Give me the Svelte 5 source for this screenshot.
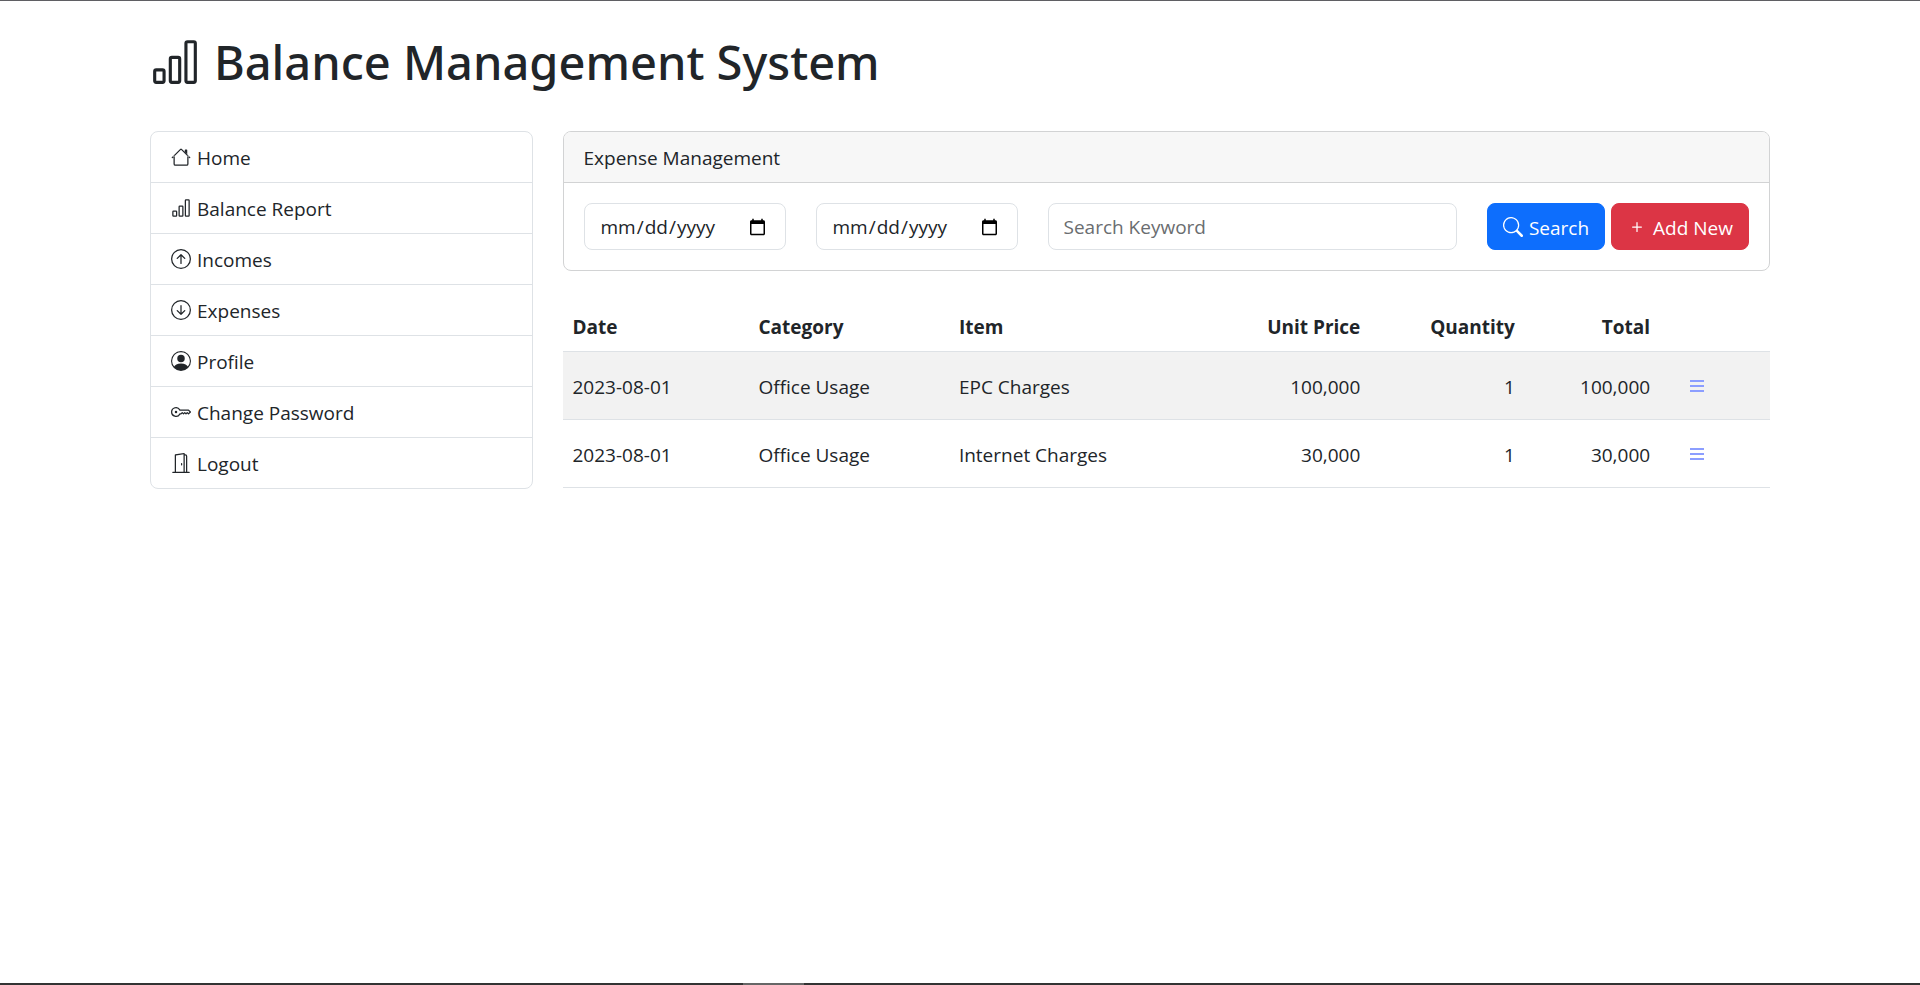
<script>
  const icons = {
    house: 'M2 13.5V7h1v6.5a.5.5 0 0 0 .5.5h9a.5.5 0 0 0 .5-.5V7h1v6.5a1.5 1.5 0 0 1-1.5 1.5h-9A1.5 1.5 0 0 1 2 13.5zm11-11V6l-2-2V2.5a.5.5 0 0 1 .5-.5h1a.5.5 0 0 1 .5.5zM7.293 1.5a1 1 0 0 1 1.414 0l6.647 6.646a.5.5 0 0 1-.708.708L8 2.207 1.354 8.854a.5.5 0 1 1-.708-.708L7.293 1.5z',
    chart: 'M4 11H2v3h2v-3zm5-4H7v7h2V7zm5-5v12h-2V2h2zm-2-1a1 1 0 0 0-1 1v12a1 1 0 0 0 1 1h2a1 1 0 0 0 1-1V2a1 1 0 0 0-1-1h-2zM6 7a1 1 0 0 1 1-1h2a1 1 0 0 1 1 1v7a1 1 0 0 1-1 1H7a1 1 0 0 1-1-1V7zm-5 4a1 1 0 0 1 1-1h2a1 1 0 0 1 1 1v3a1 1 0 0 1-1 1H2a1 1 0 0 1-1-1v-3z',
    up: 'M1 8a7 7 0 1 0 14 0A7 7 0 0 0 1 8zm15 0A8 8 0 1 1 0 8a8 8 0 0 1 16 0zm-7.5 3.5a.5.5 0 0 1-1 0V5.707L5.354 7.854a.5.5 0 1 1-.708-.708l3-3a.5.5 0 0 1 .708 0l3 3a.5.5 0 0 1-.708.708L8.5 5.707V11.5z',
    down: 'M1 8a7 7 0 1 0 14 0A7 7 0 0 0 1 8zm15 0A8 8 0 1 1 0 8a8 8 0 0 1 16 0zM8.5 4.5a.5.5 0 0 0-1 0v5.793L5.354 8.146a.5.5 0 1 0-.708.708l3 3a.5.5 0 0 0 .708 0l3-3a.5.5 0 0 0-.708-.708L8.5 10.293V4.5z',
    person: 'M11 6a3 3 0 1 1-6 0 3 3 0 0 1 6 0zM0 8a8 8 0 1 1 16 0A8 8 0 0 1 0 8zm8-7a7 7 0 0 0-5.468 11.37C3.242 11.226 4.805 10 8 10s4.757 1.225 5.468 2.37A7 7 0 0 0 8 1z',
    key: 'M0 8a4 4 0 0 1 7.465-2H14a.5.5 0 0 1 .354.146l1.5 1.5a.5.5 0 0 1 0 .708l-1.5 1.5a.5.5 0 0 1-.708 0L13 9.207l-.646.647a.5.5 0 0 1-.708 0L11 9.207l-.646.647a.5.5 0 0 1-.708 0L9 9.207l-.646.647A.5.5 0 0 1 8 10h-.535A4 4 0 0 1 0 8zm4-3a3 3 0 1 0 2.712 4.285A.5.5 0 0 1 7.163 9h.63l.853-.854a.5.5 0 0 1 .708 0l.646.647.646-.647a.5.5 0 0 1 .708 0l.646.647.646-.647a.5.5 0 0 1 .708 0l.646.647.793-.793-1-1h-6.63a.5.5 0 0 1-.451-.285A3 3 0 0 0 4 5zM5 8a1 1 0 1 1-2 0 1 1 0 0 1 2 0z',
    door: 'M8.5 10c-.276 0-.5-.448-.5-1s.224-1 .5-1 .5.448.5 1-.224 1-.5 1zM10.828.122A.5.5 0 0 1 11 .5V1h.5A1.5 1.5 0 0 1 13 2.5V15h1.5a.5.5 0 0 1 0 1h-13a.5.5 0 0 1 0-1H3V1.5a.5.5 0 0 1 .43-.495l7-1a.5.5 0 0 1 .398.117zM11.5 2H11v13h1V2.5a.5.5 0 0 0-.5-.5zM4 1.934V15h6V1.077l-6 .857z',
    search: 'M11.742 10.344a6.5 6.5 0 1 0-1.397 1.398h-.001c.03.04.062.078.098.115l3.85 3.85a1 1 0 0 0 1.415-1.414l-3.85-3.85a1.007 1.007 0 0 0-.115-.1zM12 6.5a5.5 5.5 0 1 1-11 0 5.5 5.5 0 0 1 11 0z',
    plus: 'M8 4a.5.5 0 0 1 .5.5v3h3a.5.5 0 0 1 0 1h-3v3a.5.5 0 0 1-1 0v-3h-3a.5.5 0 0 1 0-1h3v-3A.5.5 0 0 1 8 4z',
    list: 'M2.4 3.2h11.2v1.6H2.4zM2.4 7.2h11.2v1.6H2.4zM2.4 11.2h11.2v1.6H2.4z'
  };

  const menu = [
    { label: 'Home', icon: 'house' },
    { label: 'Balance Report', icon: 'chart' },
    { label: 'Incomes', icon: 'up' },
    { label: 'Expenses', icon: 'down' },
    { label: 'Profile', icon: 'person' },
    { label: 'Change Password', icon: 'key' },
    { label: 'Logout', icon: 'door' }
  ];

  const rows = [
    { date: '2023-08-01', category: 'Office Usage', item: 'EPC Charges', price: 100000, quantity: 1 },
    { date: '2023-08-01', category: 'Office Usage', item: 'Internet Charges', price: 30000, quantity: 1 }
  ];

  const format = (n) => n.toLocaleString('en-US');
</script>

{#snippet icon(name)}
  <svg class="icon" viewBox="0 0 16 16" fill="currentColor" fill-rule="evenodd" aria-hidden="true">
    <path d={icons[name]} />
  </svg>
{/snippet}

<div class="page">
  <div class="container">
    <h1>{@render icon('chart')}<span>Balance Management System</span></h1>

    <div class="layout">
      <nav class="menu">
        {#each menu as entry}
          <a href="#{entry.icon}">{@render icon(entry.icon)}<span class="label">{entry.label}</span></a>
        {/each}
      </nav>

      <main>
        <section class="card">
          <header>Expense Management</header>
          <form onsubmit={(e) => e.preventDefault()}>
            <input class="date" type="date" aria-label="From" />
            <input class="date" type="date" aria-label="To" />
            <input class="keyword" type="text" placeholder="Search Keyword" aria-label="Search Keyword" />
            <div class="actions">
              <button class="primary" type="submit">{@render icon('search')}<span class="label">Search</span></button>
              <button class="danger" type="button">{@render icon('plus')}<span class="label">Add New</span></button>
            </div>
          </form>
        </section>

        <table>
          <colgroup>
            <col class="c-date" />
            <col class="c-category" />
            <col />
            <col class="c-price" />
            <col class="c-quantity" />
            <col class="c-total" />
            <col class="c-action" />
          </colgroup>
          <thead>
            <tr>
              <th>Date</th>
              <th>Category</th>
              <th>Item</th>
              <th class="num">Unit Price</th>
              <th class="num">Quantity</th>
              <th class="num">Total</th>
              <th></th>
            </tr>
          </thead>
          <tbody>
            {#each rows as row}
              <tr>
                <td>{row.date}</td>
                <td>{row.category}</td>
                <td>{row.item}</td>
                <td class="num">{format(row.price)}</td>
                <td class="num">{row.quantity}</td>
                <td class="num">{format(row.price * row.quantity)}</td>
                <td><button class="more" type="button" aria-label="Details">{@render icon('list')}</button></td>
              </tr>
            {/each}
          </tbody>
        </table>
      </main>
    </div>
  </div>
  <footer><i></i></footer>
</div>

<style>
  :global(body) {
    margin: 0;
    background: #fff;
  }

  .page,
  .page * {
    box-sizing: border-box;
  }

  .page {
    display: flex;
    flex-direction: column;
    min-height: 100vh;
    border-top: 1px solid #5f5f63;
    color: #212529;
    font: 19px/30px 'Open Sans', 'Noto Sans', sans-serif;
  }

  .container {
    flex: 1;
    width: 100%;
    max-width: 1650px;
    margin: 0 auto;
    padding: 30px 15px;
  }

  .icon {
    flex: none;
    width: 20px;
    height: 20px;
  }

  .label {
    padding-top: 2px;
    line-height: 28px;
  }

  h1 {
    display: flex;
    align-items: center;
    gap: 14px;
    margin: 0 0 38px;
    font-family: 'Noto Sans', 'Open Sans', sans-serif;
    font-size: 47px;
    font-weight: 500;
    line-height: 62px;
  }

  h1 .icon {
    width: 50px;
    height: 50px;
  }

  .layout {
    display: grid;
    grid-template-columns: repeat(12, minmax(0, 1fr));
    gap: 30px;
    align-items: start;
  }

  .menu {
    grid-column: span 3;
    border: 1px solid #dee2e6;
    border-radius: 8px;
  }

  .menu a {
    display: flex;
    align-items: center;
    gap: 6px;
    padding: 10px 20px;
    color: inherit;
    text-decoration: none;
  }

  .menu a + a {
    border-top: 1px solid #dee2e6;
  }

  main {
    grid-column: span 9;
  }

  .card {
    margin-bottom: 30px;
    border: 1px solid #d2d3d4;
    border-radius: 8px;
  }

  .card header {
    padding: 11px 20px 9px;
    border-bottom: 1px solid #d2d3d4;
    border-radius: 7px 7px 0 0;
    background: #f7f7f7;
  }

  form {
    display: flex;
    gap: 30px;
    padding: 20px;
  }

  input,
  button {
    height: 47px;
    padding: 8px 15px 7px;
    border: 1px solid #dee2e6;
    border-radius: 8px;
    background: #fff;
    color: inherit;
    font: inherit;
  }

  .date {
    width: 202px;
    padding-right: 16px;
  }

  .keyword {
    flex: 1;
    min-width: 0;
  }

  .keyword::placeholder {
    color: #6a6d70;
    opacity: 1;
  }

  .actions {
    display: flex;
    gap: 6px;
  }

  button {
    display: flex;
    align-items: center;
    gap: 6px;
    padding: 7px 15px;
    color: #fff;
    white-space: nowrap;
    cursor: pointer;
  }

  .primary {
    border-color: #0d6efd;
    background: #0d6efd;
  }

  .danger {
    border-color: #dc3545;
    background: #dc3545;
  }

  table {
    width: 100%;
    border-collapse: collapse;
    table-layout: fixed;
  }

  th,
  td {
    padding: 11px 10px 9px;
    border-bottom: 1px solid #dee2e6;
    text-align: left;
  }

  .c-date {
    width: 15.4%;
  }

  .c-category {
    width: 16.6%;
  }

  .c-price {
    width: 14%;
  }

  .c-quantity {
    width: 12.8%;
  }

  .c-total {
    width: 11.2%;
  }

  .c-action {
    width: 9.1%;
  }

  td:last-child {
    padding: 10px;
  }

  th.num,
  td.num {
    text-align: right;
  }

  th {
    font-weight: 700;
  }

  tbody tr:nth-child(odd) {
    background: #f2f2f2;
  }

  .more {
    padding: 7px 16px;
    border-color: transparent;
    background: transparent;
    color: #8c9eff;
  }

  footer {
    height: 2px;
    background: #333;
  }

  footer i {
    display: block;
    width: 61px;
    height: 2px;
    margin-left: 38.7%;
    background: #666;
  }
</style>
